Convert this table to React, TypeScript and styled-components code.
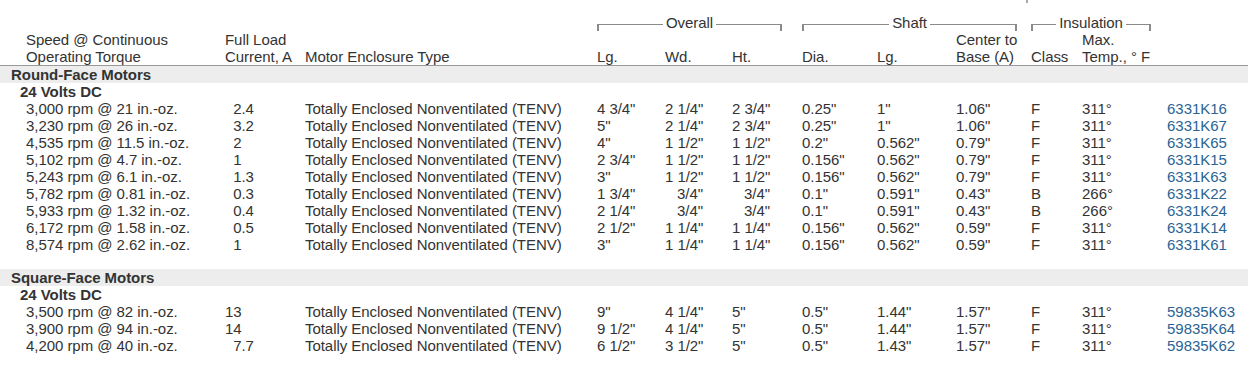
import React from "react";
import styled, { createGlobalStyle } from "styled-components";

const GlobalStyle = createGlobalStyle`
  html, body {
    margin: 0;
    padding: 0;
    background: #fff;
  }
  body {
    font-family: "Liberation Sans", Arial, sans-serif;
    font-size: 15px;
    color: #333;
  }
`;

const colWidths = [225, 80, 292, 68, 67, 70, 75, 79, 75, 51, 85, 81];

type Row = [string, string, string, string, string, string, string, string, string, string, string, string];

const roundFace: Row[] = [
  ["3,000 rpm @ 21 in.-oz.", "2.4", "Totally Enclosed Nonventilated (TENV)", "4 3/4\"", "2 1/4\"", "2 3/4\"", "0.25\"", "1\"", "1.06\"", "F", "311°", "6331K16"],
  ["3,230 rpm @ 26 in.-oz.", "3.2", "Totally Enclosed Nonventilated (TENV)", "5\"", "2 1/4\"", "2 3/4\"", "0.25\"", "1\"", "1.06\"", "F", "311°", "6331K67"],
  ["4,535 rpm @ 11.5 in.-oz.", "2", "Totally Enclosed Nonventilated (TENV)", "4\"", "1 1/2\"", "1 1/2\"", "0.2\"", "0.562\"", "0.79\"", "F", "311°", "6331K65"],
  ["5,102 rpm @ 4.7 in.-oz.", "1", "Totally Enclosed Nonventilated (TENV)", "2 3/4\"", "1 1/2\"", "1 1/2\"", "0.156\"", "0.562\"", "0.79\"", "F", "311°", "6331K15"],
  ["5,243 rpm @ 6.1 in.-oz.", "1.3", "Totally Enclosed Nonventilated (TENV)", "3\"", "1 1/2\"", "1 1/2\"", "0.156\"", "0.562\"", "0.79\"", "F", "311°", "6331K63"],
  ["5,782 rpm @ 0.81 in.-oz.", "0.3", "Totally Enclosed Nonventilated (TENV)", "1 3/4\"", "3/4\"", "3/4\"", "0.1\"", "0.591\"", "0.43\"", "B", "266°", "6331K22"],
  ["5,933 rpm @ 1.32 in.-oz.", "0.4", "Totally Enclosed Nonventilated (TENV)", "2 1/4\"", "3/4\"", "3/4\"", "0.1\"", "0.591\"", "0.43\"", "B", "266°", "6331K24"],
  ["6,172 rpm @ 1.58 in.-oz.", "0.5", "Totally Enclosed Nonventilated (TENV)", "2 1/2\"", "1 1/4\"", "1 1/4\"", "0.156\"", "0.562\"", "0.59\"", "F", "311°", "6331K14"],
  ["8,574 rpm @ 2.62 in.-oz.", "1", "Totally Enclosed Nonventilated (TENV)", "3\"", "1 1/4\"", "1 1/4\"", "0.156\"", "0.562\"", "0.59\"", "F", "311°", "6331K61"],
];

const squareFace: Row[] = [
  ["3,500 rpm @ 82 in.-oz.", "13", "Totally Enclosed Nonventilated (TENV)", "9\"", "4 1/4\"", "5\"", "0.5\"", "1.44\"", "1.57\"", "F", "311°", "59835K63"],
  ["3,900 rpm @ 94 in.-oz.", "14", "Totally Enclosed Nonventilated (TENV)", "9 1/2\"", "4 1/4\"", "5\"", "0.5\"", "1.44\"", "1.57\"", "F", "311°", "59835K64"],
  ["4,200 rpm @ 40 in.-oz.", "7.7", "Totally Enclosed Nonventilated (TENV)", "6 1/2\"", "3 1/2\"", "5\"", "0.5\"", "1.43\"", "1.57\"", "F", "311°", "59835K62"],
];

const Page = styled.div`
  position: relative;
  width: 1248px;
  padding-top: 14px;
`;

const TopMark = styled.span`
  position: absolute;
  left: 1026px;
  top: 0;
  width: 2px;
  height: 3px;
  background: #aaa;
`;

const Table = styled.table`
  width: 1248px;
  table-layout: fixed;
  border-collapse: collapse;
  border-spacing: 0;
  line-height: 17px;
  letter-spacing: -0.05px;
`;

const GroupCell = styled.th`
  padding: 0;
  height: 17px;
  font-weight: normal;
  vertical-align: top;
`;

const Bracket = styled.div<{ $w: number }>`
  display: flex;
  align-items: flex-start;
  width: ${(p) => p.$w}px;
`;

const Arm = styled.div<{ $side: "left" | "right" }>`
  flex: 1;
  height: 6px;
  margin-top: 10px;
  border-top: 1px solid #8a8a8a;
  ${(p) => (p.$side === "left" ? "border-left" : "border-right")}: 2px solid #8a8a8a;
`;

const BracketLabel = styled.span`
  padding: 0 3px;
  white-space: nowrap;
`;

const HeadRow = styled.tr`
  th {
    border-bottom: 1px solid #999;
  }
`;

const HeadCell = styled.th<{ $pad?: number }>`
  padding: 0 0 0 ${(p) => p.$pad ?? 0}px;
  height: 34px;
  font-weight: normal;
  text-align: left;
  vertical-align: bottom;
  white-space: nowrap;
`;

const BandCell = styled.td`
  padding: 0 0 0 11px;
  height: 17px;
  background: #ededed;
  font-weight: bold;
`;

const SubCell = styled.td`
  padding: 0 0 0 20px;
  height: 17px;
  font-weight: bold;
`;

const Spacer = styled.td`
  height: 16px;
  padding: 0;
`;

const Cell = styled.td<{ $pad?: number }>`
  padding: 0 0 0 ${(p) => p.$pad ?? 0}px;
  height: 17px;
  white-space: nowrap;
  vertical-align: top;
`;

const IntPart = styled.span`
  display: inline-block;
  width: 16.5px;
  text-align: right;
`;

const Frac = styled.span<{ $indent: boolean }>`
  padding-left: ${(p) => (p.$indent ? 12 : 0)}px;
`;

const PartLink = styled.a`
  color: #2a6494;
  text-decoration: none;
`;

const Decimal = ({ v }: { v: string }) => {
  const [whole, dec] = v.split(".");
  return (
    <>
      <IntPart>{whole}</IntPart>
      {dec !== undefined ? `.${dec}` : ""}
    </>
  );
};

const Dim = ({ v, align }: { v: string; align?: boolean }) => (
  <Frac $indent={!!align && !v.includes(" ") && v.includes("/")}>{v}</Frac>
);

const DataRow = ({ r }: { r: Row }) => (
  <tr>
    <Cell $pad={26}>{r[0]}</Cell>
    <Cell>
      <Decimal v={r[1]} />
    </Cell>
    <Cell>{r[2]}</Cell>
    <Cell>{r[3]}</Cell>
    <Cell>
      <Dim v={r[4]} align />
    </Cell>
    <Cell>
      <Dim v={r[5]} align />
    </Cell>
    <Cell>{r[6]}</Cell>
    <Cell>{r[7]}</Cell>
    <Cell>{r[8]}</Cell>
    <Cell>{r[9]}</Cell>
    <Cell>{r[10]}</Cell>
    <Cell>
      <PartLink href="#">{r[11]}</PartLink>
    </Cell>
  </tr>
);

const Group = ({ label, w }: { label: string; w: number }) => (
  <Bracket $w={w}>
    <Arm $side="left" />
    <BracketLabel>{label}</BracketLabel>
    <Arm $side="right" />
  </Bracket>
);

const Section = ({ title, rows }: { title: string; rows: Row[] }) => (
  <>
    <tr>
      <BandCell colSpan={12}>{title}</BandCell>
    </tr>
    <tr>
      <SubCell colSpan={12}>24 Volts DC</SubCell>
    </tr>
    {rows.map((r) => (
      <DataRow key={r[11]} r={r} />
    ))}
  </>
);

export default function App() {
  return (
    <Page>
      <GlobalStyle />
      <TopMark />
      <Table>
        <colgroup>
          {colWidths.map((w, i) => (
            <col key={i} style={{ width: w }} />
          ))}
        </colgroup>
        <thead>
          <tr>
            <GroupCell colSpan={3} />
            <GroupCell colSpan={3}>
              <Group label="Overall" w={185} />
            </GroupCell>
            <GroupCell colSpan={3}>
              <Group label="Shaft" w={215} />
            </GroupCell>
            <GroupCell colSpan={2}>
              <Group label="Insulation" w={120} />
            </GroupCell>
            <GroupCell />
          </tr>
          <HeadRow>
            <HeadCell $pad={26}>
              Speed @ Continuous
              <br />
              Operating Torque
            </HeadCell>
            <HeadCell>
              Full Load
              <br />
              Current, A
            </HeadCell>
            <HeadCell>Motor Enclosure Type</HeadCell>
            <HeadCell>Lg.</HeadCell>
            <HeadCell>Wd.</HeadCell>
            <HeadCell>Ht.</HeadCell>
            <HeadCell>Dia.</HeadCell>
            <HeadCell>Lg.</HeadCell>
            <HeadCell>
              Center to
              <br />
              Base (A)
            </HeadCell>
            <HeadCell>Class</HeadCell>
            <HeadCell>
              Max.
              <br />
              Temp., ° F
            </HeadCell>
            <HeadCell />
          </HeadRow>
        </thead>
        <tbody>
          <Section title="Round-Face Motors" rows={roundFace} />
          <tr>
            <Spacer colSpan={12} />
          </tr>
          <Section title="Square-Face Motors" rows={squareFace} />
        </tbody>
      </Table>
    </Page>
  );
}
